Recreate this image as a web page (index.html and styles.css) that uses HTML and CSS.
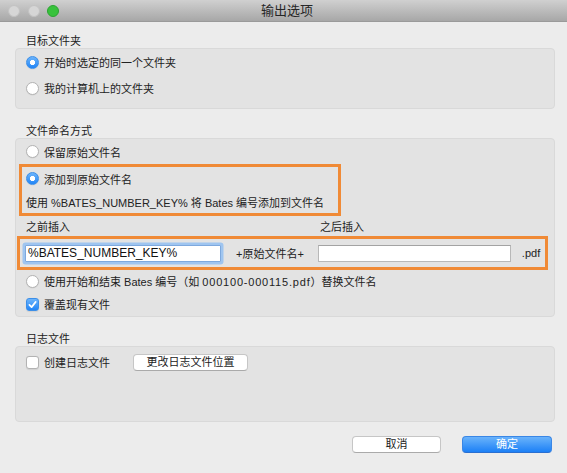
FILE: index.html
```html
<!DOCTYPE html>
<html lang="zh-CN">
<head>
<meta charset="utf-8">
<title>输出选项</title>
<link rel="stylesheet" href="styles.css">
</head>
<body>
<div class="window">
  <div class="titlebar">
    <div class="lights">
      <span class="light gray"></span>
      <span class="light gray"></span>
      <span class="light green"></span>
    </div>
    <div class="title">输出选项</div>
    <div></div>
  </div>

  <div class="content">
    <div class="section-label first">目标文件夹</div>
    <div class="group g1">
      <div class="row h26"><span class="radio on"></span><span>开始时选定的同一个文件夹</span></div>
      <div class="row h26"><span class="radio"></span><span>我的计算机上的文件夹</span></div>
    </div>

    <div class="section-label">文件命名方式</div>
    <div class="group g2">
      <div class="row h25 pad"><span class="radio"></span><span>保留原始文件名</span></div>
      <div class="orange o1">
        <div class="row h23"><span class="radio on"></span><span>添加到原始文件名</span></div>
        <div class="row h23"><span>使用 %BATES_NUMBER_KEY% 将 Bates 编号添加到文件名</span></div>
      </div>
      <div class="labels">
        <span class="before">之前插入</span>
        <span>之后插入</span>
      </div>
      <div class="orange o2">
        <div class="field f1">%BATES_NUMBER_KEY%</div>
        <span class="joiner">+原始文件名+</span>
        <div class="field f2"></div>
        <span class="ext">.pdf</span>
      </div>
      <div class="row h22 pad"><span class="radio"></span><span>使用开始和结束 Bates 编号（如 <span class="num">000100-000115.pdf</span>）替换文件名</span></div>
      <div class="row h24 pad">
        <span class="check on"><svg viewBox="0 0 13 13" width="13" height="13"><path d="M3.4 6.9 L5.6 9.1 L9.7 3.9" fill="none" stroke="#fff" stroke-width="1.7" stroke-linecap="round" stroke-linejoin="round"/></svg></span>
        <span>覆盖现有文件</span>
      </div>
    </div>

    <div class="section-label">日志文件</div>
    <div class="group g3">
      <div class="row h30 pad">
        <span class="check"></span>
        <span>创建日志文件</span>
        <span class="btn change">更改日志文件位置</span>
      </div>
    </div>
  </div>

  <div class="footer">
    <span class="btn action">取消</span>
    <span class="btn action primary">确定</span>
  </div>
</div>
</body>
</html>
```

FILE: styles.css
```css
* { box-sizing: border-box; }

html, body { margin: 0; padding: 0; }

body {
  width: 567px;
  height: 473px;
  overflow: hidden;
  background: #ececec;
  font-family: "Liberation Sans", "Noto Sans CJK SC", sans-serif;
  font-size: 11px;
  color: #222;
}

.titlebar {
  height: 22px;
  display: grid;
  grid-template-columns: 1fr auto 1fr;
  align-items: center;
  background: linear-gradient(to bottom, #d0d0d0, #a7a7a7);
  border-bottom: 1px solid #9a9a9a;
}

.lights {
  display: flex;
  gap: 7.5px;
  padding-left: 8px;
}

.light {
  width: 12px;
  height: 12px;
  border-radius: 50%;
}

.light.gray {
  background: #d6d6d6;
  border: 1px solid #c3c3c3;
}

.light.green {
  background: #38c23c;
  border: 1px solid #2ca432;
}

.title {
  font-size: 13px;
  color: #262626;
  padding-left: 7px;
  line-height: 16px;
}

.content {
  padding: 0 12px 0 15px;
}

.section-label {
  padding-left: 11px;
  height: 14px;
  line-height: 14px;
  margin-top: 15px;
}

.section-label.first { margin-top: 12px; }

.group {
  background: #e3e3e3;
  border: 1px solid #d9d9d9;
  border-radius: 4px;
}

.g1 { padding: 0 0 7px 10px; }

.g3 { height: 76px; }

.row {
  display: flex;
  align-items: center;
  gap: 5px;
}

.h22 { height: 22px; }
.h23 { height: 23px; }
.h24 { height: 24px; }
.h25 { height: 25px; }
.h26 { height: 26px; }
.h30 { height: 30px; }

.pad { padding-left: 10px; }

.num { letter-spacing: 0.8px; }

.radio {
  flex: none;
  width: 13px;
  height: 13px;
  border-radius: 50%;
  background: #fff;
  border: 1px solid #b3b3b3;
  box-shadow: 0 0.5px 1px rgba(0,0,0,0.08);
}

.radio.on {
  border-color: #3c8fe8;
  background:
    radial-gradient(circle, #fff 0 2.3px, transparent 2.9px),
    linear-gradient(to bottom, #6cb4fb, #2185f7);
}

.check {
  flex: none;
  width: 13px;
  height: 13px;
  border-radius: 3px;
  background: #fff;
  border: 1px solid #b3b3b3;
  box-shadow: 0 0.5px 1px rgba(0,0,0,0.08);
  display: flex;
}

.check.on {
  border-color: #3c8fe8;
  background: linear-gradient(to bottom, #6cb4fb, #2185f7);
}

.check svg { margin: -1px; }

.orange { border: 3px solid #f08a36; }

.o1 {
  margin-left: 3px;
  width: 322px;
  padding-left: 4px;
}

.labels {
  display: flex;
  height: 20px;
  padding: 2px 0 0 10px;
  line-height: 18px;
}

.labels .before { width: 294px; }

.o2 {
  margin-left: 1px;
  width: 531px;
  height: 34px;
  display: flex;
  align-items: center;
}

.field {
  height: 17px;
  background: #fff;
  border: 1px solid #b8b8b8;
  border-top-color: #a3a3a3;
  font-size: 12px;
  line-height: 15px;
  padding: 0 2px;
  color: #111;
}

.f1 {
  width: 196px;
  margin: 0 15px 0 5px;
  border-color: #7ea9de;
  box-shadow: 0 0 0 2.5px #9fc5f0;
  border-radius: 1px;
}

.f2 {
  width: 193px;
  margin-left: 14px;
}

.ext { margin-left: 11px; }

.btn {
  display: inline-block;
  height: 17px;
  line-height: 15px;
  text-align: center;
  background: #fff;
  border: 1px solid #c6c6c6;
  border-bottom-color: #aaaaaa;
  border-radius: 4px;
  color: #222;
}

.change {
  width: 115px;
  margin-left: 18px;
}

.footer {
  display: flex;
  justify-content: flex-end;
  gap: 21px;
  padding-right: 15px;
  margin-top: 14px;
}

.action { width: 89px; }

.action.primary {
  width: 90px;
  background: linear-gradient(to bottom, #6ab3fb, #1c80f6);
  border-color: #3a87e6;
  border-bottom-color: #2a6fd0;
  color: #fff;
}
```
